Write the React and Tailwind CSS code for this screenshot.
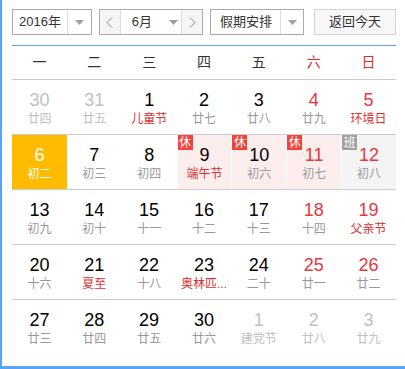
import React from "react";

const F = { fontFamily: '"Liberation Sans", "Noto Sans CJK SC", sans-serif' };

const rows = [
  [
    { d: 30, l: "廿四", o: true },
    { d: 31, l: "廿五", o: true },
    { d: 1, l: "儿童节", f: true },
    { d: 2, l: "廿七" },
    { d: 3, l: "廿八" },
    { d: 4, l: "廿九", w: true },
    { d: 5, l: "环境日", w: true, f: true },
  ],
  [
    { d: 6, l: "初二", sel: true },
    { d: 7, l: "初三" },
    { d: 8, l: "初四" },
    { d: 9, l: "端午节", f: true, rest: true },
    { d: 10, l: "初六", rest: true },
    { d: 11, l: "初七", w: true, rest: true },
    { d: 12, l: "初八", w: true, work: true },
  ],
  [
    { d: 13, l: "初九" },
    { d: 14, l: "初十" },
    { d: 15, l: "十一" },
    { d: 16, l: "十二" },
    { d: 17, l: "十三" },
    { d: 18, l: "十四", w: true },
    { d: 19, l: "父亲节", w: true, f: true },
  ],
  [
    { d: 20, l: "十六" },
    { d: 21, l: "夏至", f: true },
    { d: 22, l: "十八" },
    { d: 23, l: "奥林匹...", f: true },
    { d: 24, l: "二十" },
    { d: 25, l: "廿一", w: true },
    { d: 26, l: "廿二", w: true },
  ],
  [
    { d: 27, l: "廿三" },
    { d: 28, l: "廿四" },
    { d: 29, l: "廿五" },
    { d: 30, l: "廿六" },
    { d: 1, l: "建党节", o: true },
    { d: 2, l: "廿八", o: true },
    { d: 3, l: "廿九", o: true },
  ],
];

function Tri() {
  return (
    <svg width="9" height="5" viewBox="0 0 9 5">
      <path d="M0 0 L9 0 L4.5 5 Z" fill="#a0a0a0" />
    </svg>
  );
}

function Cell({ c }) {
  let bg = "bg-white";
  if (c.sel) bg = "bg-[#ffbb00]";
  else if (c.rest) bg = "bg-[#fdeeee]";
  else if (c.work) bg = "bg-[#f4f4f4]";
  let num = "text-black";
  if (c.sel) num = "text-white";
  else if (c.o) num = "text-[#c0c0c0]";
  else if (c.w) num = "text-[#e8383d]";
  let lun = "text-[#999999]";
  if (c.sel) lun = "text-white";
  else if (c.o) lun = "text-[#c0c0c0]";
  else if (c.f) lun = "text-[#e02d2d]";
  return (
    <div className={`relative flex h-[54px] flex-col items-center ${bg} ${c.rest || c.work ? "border-l border-white" : ""}`}>
      {(c.rest || c.work) && (
        <div
          className={`absolute left-0 top-0 flex h-[15px] w-[15px] items-center justify-center text-[12px] leading-none text-white ${c.rest ? "bg-[#f4433a]" : "bg-[#a0a0a0]"}`}
        >
          {c.rest ? "休" : "班"}
        </div>
      )}
      <div className={`mt-[10px] h-[20px] text-[18px] leading-[20px] ${num}`}>{c.d}</div>
      <div className={`mt-[0px] whitespace-nowrap text-[12px] leading-[18px] ${lun}`}>{c.l}</div>
    </div>
  );
}

export default function App() {
  return (
    <div style={F} className="h-[369px] w-[405px] border-b-[3px] border-l-2 border-[#5aa2f5] bg-white pl-[10px] pr-[9px]">
      <div className="flex h-[45px] items-start pt-[9px] text-[13px] text-[#333]">
        <div className="flex h-[26px] w-[80px] border border-[#aaaaaa]">
          <div className="flex w-[54px] items-center justify-center">2016年</div>
          <div className="flex flex-1 items-center justify-center border-l border-[#dddddd]">
            <Tri />
          </div>
        </div>
        <div className="ml-[7px] flex h-[26px] w-[105px] border border-[#aaaaaa]">
          <div className="flex w-[21px] items-center justify-center bg-[#f5f5f5] border-r border-[#dddddd]">
            <svg width="7" height="11" viewBox="0 0 7 11">
              <path d="M6 0.5 L1 5.5 L6 10.5" fill="none" stroke="#888" strokeWidth="1" />
            </svg>
          </div>
          <div className="flex w-[60px] items-center">
            <span className="ml-[11px]">6月</span>
            <span className="ml-[17px] flex"><Tri /></span>
          </div>
          <div className="flex flex-1 items-center justify-center bg-[#f5f5f5] border-l border-[#dddddd]">
            <svg width="7" height="11" viewBox="0 0 7 11">
              <path d="M1 0.5 L6 5.5 L1 10.5" fill="none" stroke="#888" strokeWidth="1" />
            </svg>
          </div>
        </div>
        <div className="ml-[7px] flex h-[26px] w-[94px] border border-[#aaaaaa]">
          <div className="flex w-[69px] items-center justify-center">假期安排</div>
          <div className="flex flex-1 items-center justify-center border-l border-[#dddddd]">
            <Tri />
          </div>
        </div>
        <div className="ml-[10px] flex h-[26px] w-[82px] items-center justify-center border border-[#d4d4d4] bg-[#f7f7f7]">
          返回今天
        </div>
      </div>
      <div className="h-px bg-[#5aa2f5]" />
      <div className="grid h-[34px] grid-cols-7 border-b border-[#cccccc] text-[14px]">
        {["一", "二", "三", "四", "五", "六", "日"].map((d, i) => (
          <div key={i} className={`flex items-center justify-center ${i >= 5 ? "text-[#e02d2d]" : "text-[#333]"}`}>
            {d}
          </div>
        ))}
      </div>
      {rows.map((r, i) => (
        <div key={i} className={`grid grid-cols-7 ${i < 4 ? "border-b border-[#cccccc]" : ""}`}>
          {r.map((c, j) => (
            <Cell key={j} c={c} />
          ))}
        </div>
      ))}
    </div>
  );
}
